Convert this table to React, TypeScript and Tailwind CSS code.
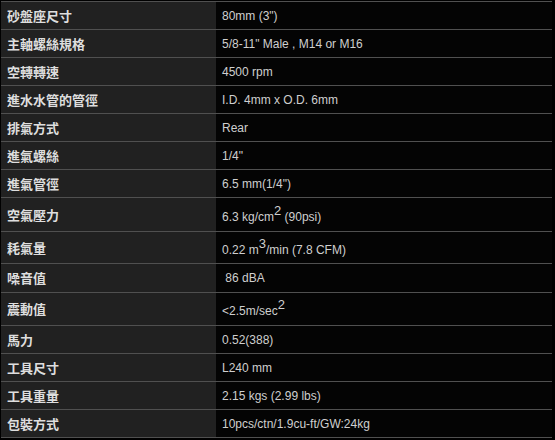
import React from "react";

type Row = { label: string; value: React.ReactNode; h: string; sup?: boolean };

const Sup = ({ children }: { children: React.ReactNode }) => (
  <sup className="text-[13px] relative top-[-6px] leading-none align-baseline">{children}</sup>
);

const rows: Row[] = [
  { label: "砂盤座尺寸", value: '80mm (3")', h: "h-[28px]" },
  { label: "主軸螺絲規格", value: '5/8-11" Male , M14 or M16', h: "h-[28px]" },
  { label: "空轉轉速", value: "4500 rpm", h: "h-[28px]" },
  { label: "進水水管的管徑", value: "I.D. 4mm x O.D. 6mm", h: "h-[28px]" },
  { label: "排氣方式", value: "Rear", h: "h-[28px]" },
  { label: "進氣螺絲", value: '1/4"', h: "h-[28px]" },
  { label: "進氣管徑", value: '6.5 mm(1/4")', h: "h-[28px]" },
  {
    label: "空氣壓力",
    value: (
      <>
        6.3 kg/cm<Sup>2</Sup> (90psi)
      </>
    ),
    h: "h-[34px]",
    sup: true,
  },
  {
    label: "耗氣量",
    value: (
      <>
        0.22 m<Sup>3</Sup>/min (7.8 CFM)
      </>
    ),
    h: "h-[32px]",
    sup: true,
  },
  { label: "噪音值", value: "\u00a086 dBA", h: "h-[29px]" },
  {
    label: "震動值",
    value: (
      <>
        &lt;2.5m/sec<Sup>2</Sup>
      </>
    ),
    h: "h-[33px]",
    sup: true,
  },
  { label: "馬力", value: "0.52(388)", h: "h-[28px]" },
  { label: "工具尺寸", value: "L240 mm", h: "h-[28px]" },
  { label: "工具重量", value: "2.15 kgs (2.99 lbs)", h: "h-[28px]" },
  { label: "包裝方式", value: "10pcs/ctn/1.9cu-ft/GW:24kg", h: "h-[28px]" },
];

export default function App() {
  return (
    <div className="w-[555px] h-[440px] bg-black pt-[1px] pl-[1px] overflow-hidden">
      <div className="w-[551px] flex flex-col border-b border-[#505050]">
        {rows.map((r, i) => (
          <div
            key={i}
            className={`flex border-t border-[#505050] ${r.h}`}
          >
            <div
              className="w-[215px] shrink-0 bg-[#212121] flex items-center pl-[6px] text-[13px] font-bold text-[#dedede]"
              style={{ fontFamily: '"Noto Sans CJK TC", "Noto Sans", sans-serif' }}
            >
              {r.label}
            </div>
            <div
              className={`flex-1 bg-[#040404] flex items-center pl-[6px] text-[12px] text-[#cfcfcf] whitespace-pre ${
                r.sup ? "pt-[4px]" : ""
              }`}
              style={{ fontFamily: '"Liberation Sans", Arial, sans-serif' }}
            >
              <span>{r.value}</span>
            </div>
          </div>
        ))}
      </div>
    </div>
  );
}
